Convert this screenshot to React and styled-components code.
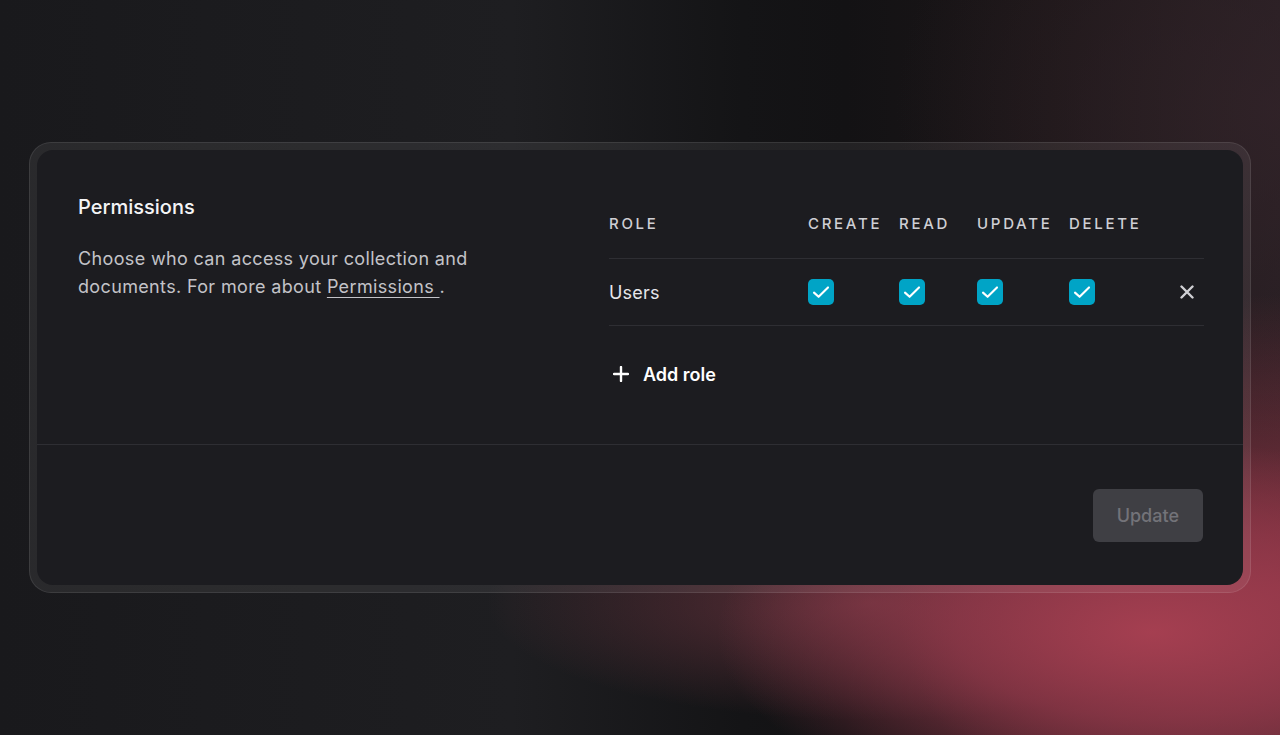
import styled, { createGlobalStyle } from 'styled-components';

const GlobalStyle = createGlobalStyle`
	* { box-sizing: border-box; }
	html, body, #root { margin: 0; height: 100%; }
	body {
		font-family: Inter, 'Noto Sans', sans-serif;
		background: #161618;
		-webkit-font-smoothing: antialiased;
	}
`;

const roles = [{ id: 'users', name: 'Users', create: true, read: true, update: true, remove: true }];

function CheckIcon() {
	return (
		<svg width='18' height='18' viewBox='0 0 18 18' fill='none'>
			<path d='M2 9.6l4.6 4.2L16 4.4' stroke='#fff' strokeWidth='2.1' strokeLinecap='round' strokeLinejoin='round' />
		</svg>
	);
}

function Checkbox({ checked }) {
	return <Box $checked={checked}>{checked && <CheckIcon />}</Box>;
}

function App() {
	return (
		<>
			<GlobalStyle />
			<Page>
				<Frame>
					<Card>
						<Section>
							<Intro>
								<Title>Permissions</Title>
								<Description>
									Choose who can access your collection and documents. For more about{' '}
									<Link href='#'>Permissions </Link>.
								</Description>
							</Intro>
							<TableWrap>
								<Grid>
									<HeadCell>Role</HeadCell>
									<HeadCell>Create</HeadCell>
									<HeadCell>Read</HeadCell>
									<HeadCell>Update</HeadCell>
									<HeadCell>Delete</HeadCell>
									<HeadCell />
								</Grid>
								{roles.map((role) => (
									<Row key={role.id}>
										<RoleName>{role.name}</RoleName>
										<Checkbox checked={role.create} />
										<Checkbox checked={role.read} />
										<Checkbox checked={role.update} />
										<Checkbox checked={role.remove} />
										<RemoveButton aria-label='Remove role'>
											<svg width='14' height='14' viewBox='0 0 14 14' fill='none'>
												<path d='M1.5 1.5l11 11M12.5 1.5l-11 11' stroke='#d0d0d4' strokeWidth='2.4' strokeLinecap='round' />
											</svg>
										</RemoveButton>
									</Row>
								))}
								<AddRole>
									<svg width='16' height='16' viewBox='0 0 16 16' fill='none'>
										<path d='M8 1v14M1 8h14' stroke='#fff' strokeWidth='2.4' strokeLinecap='round' />
									</svg>
									Add role
								</AddRole>
							</TableWrap>
						</Section>
						<Footer>
							<UpdateButton disabled>Update</UpdateButton>
						</Footer>
					</Card>
				</Frame>
			</Page>
		</>
	);
}

export default App;

const Page = styled.div`
	min-height: 100vh;
	display: flex;
	align-items: center;
	justify-content: center;
	background:
		radial-gradient(ellipse 34% 26% at 90% 86%, rgba(168, 64, 82, 0.95) 0%, rgba(150, 58, 76, 0.75) 45%, rgba(120, 48, 62, 0) 100%),
		radial-gradient(ellipse 30% 40% at 100% 80%, rgba(160, 56, 74, 0.8) 0%, rgba(140, 50, 66, 0) 100%),
		radial-gradient(ellipse 30% 16% at 68% 82%, rgba(120, 58, 70, 0.75) 0%, rgba(100, 48, 60, 0) 100%),
		radial-gradient(ellipse 30% 45% at 100% 15%, rgba(52, 36, 42, 0.7) 0%, rgba(40, 26, 30, 0) 100%),
		linear-gradient(90deg, #19191c 0%, #1e1e21 40%, #141416 58%, #131214 66%, #1c1618 82%, #261e22 100%);
`;

const Frame = styled.div`
	width: 1222px;
	padding: 7px;
	border-radius: 22px;
	background: rgba(255, 255, 255, 0.07);
	border: 1px solid rgba(255, 255, 255, 0.09);
`;

const Card = styled.div`
	background: #1c1c20;
	border-radius: 16px;
	overflow: hidden;
`;

const Section = styled.div`
	display: flex;
	padding: 43px 39px 56px 41px;
`;

const Intro = styled.div`
	width: 531px;
	flex-shrink: 0;
	padding-right: 50px;
`;

const Title = styled.h2`
	margin: 0;
	font-size: 20px;
	line-height: 28px;
	font-weight: 500;
	color: #f4f4f6;
	letter-spacing: 0;
`;

const Description = styled.p`
	margin: 24px 0 0;
	font-size: 18px;
	line-height: 28px;
	color: #c3c3c8;
	letter-spacing: 0.35px;
`;

const Link = styled.a`
	color: inherit;
	text-decoration: underline;
	text-underline-offset: 4px;
	text-decoration-thickness: 1px;
	white-space: pre;
`;

const TableWrap = styled.div`
	flex: 1;
	margin-top: 21px;
`;

const columns = '199px 91px 78px 92px 1fr 40px';

const Grid = styled.div`
	display: grid;
	grid-template-columns: ${columns};
	align-items: center;
	padding-bottom: 24px;
	border-bottom: 1px solid #2e2e33;
`;

const HeadCell = styled.div`
	font-size: 15px;
	line-height: 20px;
	font-weight: 500;
	letter-spacing: 2.7px;
	text-transform: uppercase;
	color: #cfcfd4;
`;

const Row = styled.div`
	display: grid;
	grid-template-columns: ${columns};
	align-items: center;
	height: 67px;
	border-bottom: 1px solid #2e2e33;
`;

const RoleName = styled.div`
	font-size: 18px;
	color: #e6e6ea;
	letter-spacing: 0.2px;
`;

const Box = styled.div`
	width: 26px;
	height: 26px;
	border-radius: 5px;
	display: flex;
	align-items: center;
	justify-content: center;
	background: ${(p) => (p.$checked ? '#00a4c6' : 'transparent')};
	border: ${(p) => (p.$checked ? 'none' : '1px solid #55555b')};
`;

const RemoveButton = styled.button`
	display: flex;
	align-items: center;
	justify-content: center;
	justify-self: end;
	width: 30px;
	height: 30px;
	margin-right: 2px;
	padding: 0;
	background: none;
	border: none;
	cursor: pointer;
`;

const AddRole = styled.button`
	display: flex;
	align-items: center;
	gap: 14px;
	margin-top: 34px;
	padding: 0 0 0 4px;
	height: 28px;
	background: none;
	border: none;
	font-family: inherit;
	font-size: 18px;
	font-weight: 600;
	color: #fff;
	cursor: pointer;
`;

const Footer = styled.div`
	display: flex;
	justify-content: flex-end;
	padding: 44px 40px 43px;
	border-top: 1px solid #2e2e33;
`;

const UpdateButton = styled.button`
	height: 53px;
	padding: 0 24px;
	border-radius: 6px;
	border: none;
	background: #3f3f44;
	color: #737379;
	font-family: inherit;
	font-size: 18px;
	font-weight: 500;
`;
